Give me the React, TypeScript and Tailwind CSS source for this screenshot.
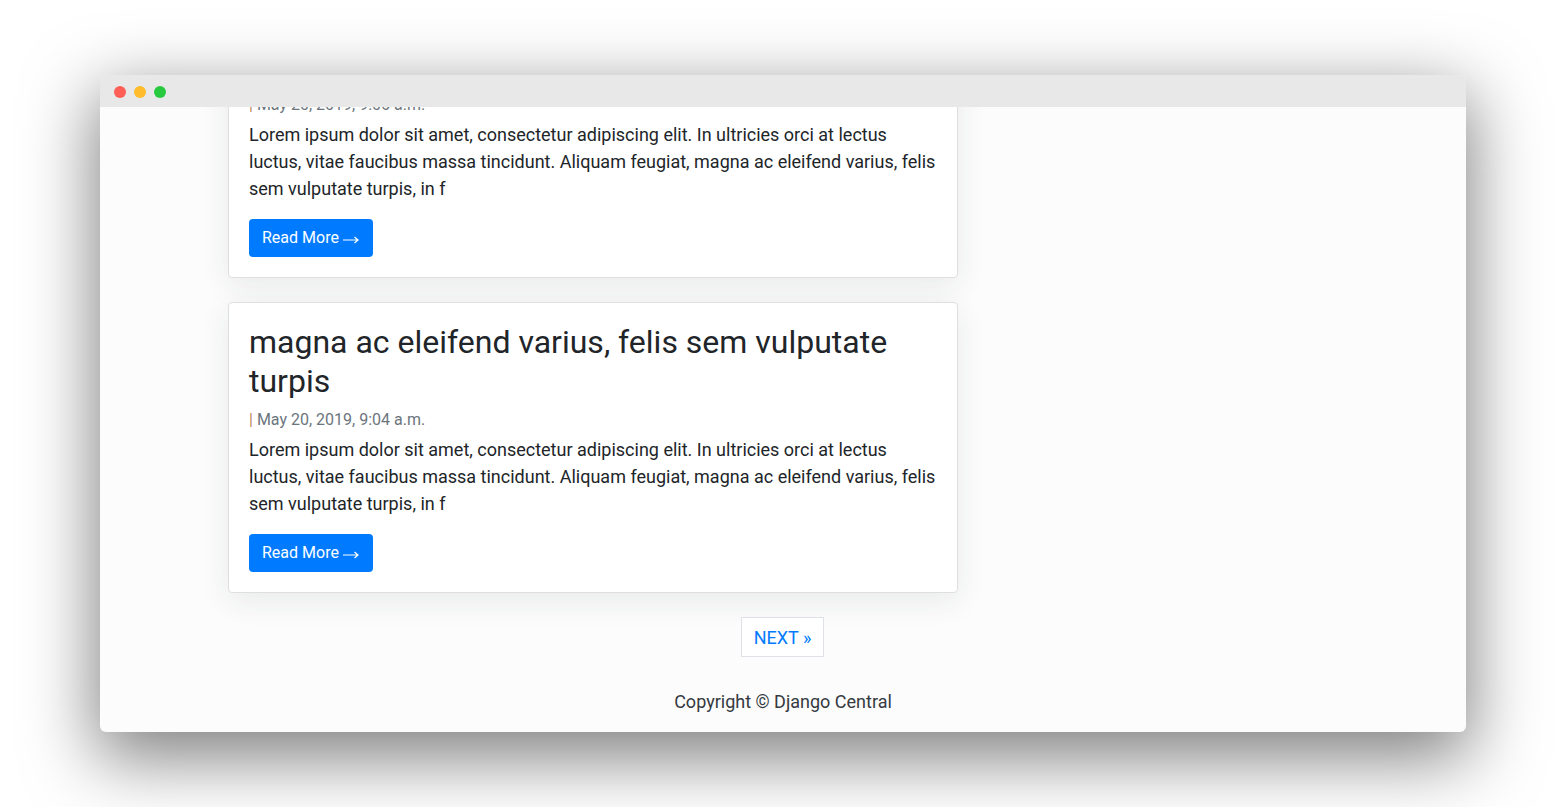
const body =
  "Lorem ipsum dolor sit amet, consectetur adipiscing elit. In ultricies orci at lectus luctus, vitae faucibus massa tincidunt. Aliquam feugiat, magna ac eleifend varius, felis sem vulputate turpis, in f";

interface Post {
  title: string;
  date: string;
}

const posts: Post[] = [
  { title: "Lorem ipsum dolor sit amet", date: "May 20, 2019, 9:06 a.m." },
  { title: "magna ac eleifend varius, felis sem vulputate turpis", date: "May 20, 2019, 9:04 a.m." },
];

function PostCard({ post }: { post: Post }) {
  return (
    <div className="rounded bg-white border border-[#dfdfdf] shadow-[0_8px_30px_rgba(30,40,60,0.09)] px-5 pt-5 pb-5">
      <h2 className="text-[32px] leading-[38.4px] text-[#212529] mb-2">{post.title}</h2>
      <p className="text-[16px] leading-6 text-[#6c757d] mb-1 mt-[2px]">
        <span className="text-[#c0875a]">|</span> {post.date}
      </p>
      <p className="text-[18px] leading-[27px] text-[#212529] mb-[17px]">{body}</p>
      <button className="h-[38px] pl-[13px] pr-[14px] rounded bg-[#007bff] text-white text-[16px] leading-6 flex items-center">
        Read More
        <svg width="16" height="10" viewBox="0 0 16 10" className="ml-[4px] mt-[3px]" fill="none" stroke="currentColor" strokeWidth="1.2">
          <path d="M0 5h15M11.5 2l3.5 3-3.5 3" />
        </svg>
      </button>
    </div>
  );
}

export default function App() {
  return (
    <div
      className="w-[1566px] h-[807px] bg-white pt-[75px] pl-[100px] overflow-hidden"
      style={{ fontFamily: "Roboto, 'Liberation Sans', sans-serif" }}
    >
      <div className="w-[1366px] h-[657px] rounded-md overflow-hidden bg-[#fcfcfc] shadow-[0_22px_70px_4px_rgba(0,0,0,0.5)] flex flex-col">
        <div className="h-8 shrink-0 bg-[#e8e8e8] flex items-center gap-2 pl-[14px] pt-0.5 relative z-10">
          <span className="w-3 h-3 rounded-full bg-[#ff5f56]" />
          <span className="w-3 h-3 rounded-full bg-[#ffbd2e]" />
          <span className="w-3 h-3 rounded-full bg-[#27c93f]" />
        </div>
        <div className="flex-1 overflow-hidden">
          <div className="mt-[-81px] w-[1140px] mx-auto px-[15px]">
            <div className="w-[730px] flex flex-col gap-6">
              {posts.map((p, i) => (
                <PostCard key={i} post={p} />
              ))}
            </div>
            <div className="flex justify-center mt-6 pr-px">
              <a className="h-10 px-3 flex items-center border border-[#dee2e6] bg-white text-[#007bff] text-[18px]">
                NEXT &raquo;
              </a>
            </div>
            <p className="text-center text-[18px] text-[#343a40] mt-[31px]">Copyright &copy; Django Central</p>
          </div>
        </div>
      </div>
    </div>
  );
}
